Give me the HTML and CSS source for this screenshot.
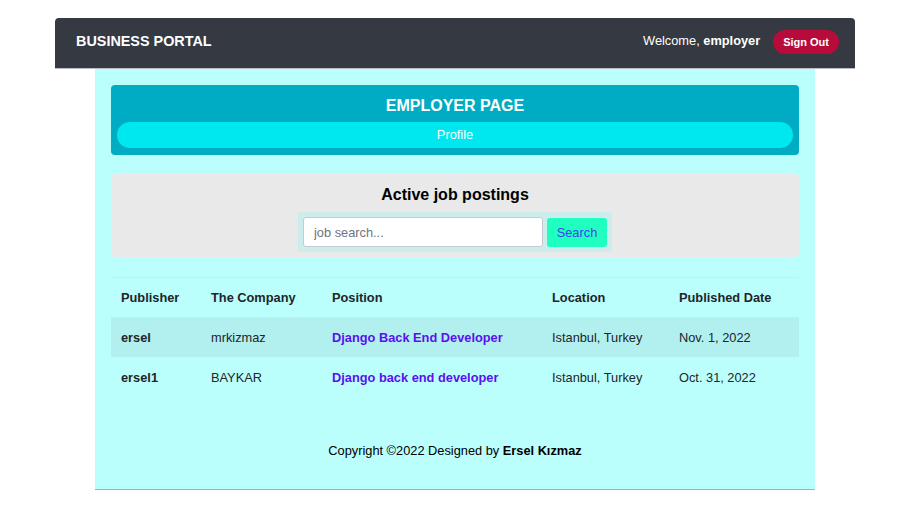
FILE: index.html
```html
<!DOCTYPE html>
<html lang="en">
<head>
<meta charset="utf-8">
<title>Business Portal</title>
<link rel="stylesheet" href="styles.css">
</head>
<body>
<div class="page">
  <nav class="navbar">
    <span class="brand">BUSINESS PORTAL</span>
    <div class="nav-right">
      <span class="welcome">Welcome, <b>employer</b></span>
      <a class="signout" href="#">Sign Out</a>
    </div>
  </nav>
  <main class="container">
    <section class="emp-card">
      <h2 class="emp-title">EMPLOYER PAGE</h2>
      <a class="profile" href="#">Profile</a>
    </section>
    <section class="postings">
      <h3 class="postings-title">Active job postings</h3>
      <form class="search">
        <input class="search-input" type="text" placeholder="job search...">
        <button class="search-btn" type="button">Search</button>
      </form>
    </section>
    <table class="jobs">
      <colgroup>
        <col class="c1"><col class="c2"><col class="c3"><col class="c4"><col class="c5">
      </colgroup>
      <thead>
        <tr><th>Publisher</th><th>The Company</th><th>Position</th><th>Location</th><th>Published Date</th></tr>
      </thead>
      <tbody>
        <tr class="odd"><td class="pub">ersel</td><td>mrkizmaz</td><td><a class="pos" href="#">Django Back End Developer</a></td><td>Istanbul, Turkey</td><td>Nov. 1, 2022</td></tr>
        <tr><td class="pub">ersel1</td><td>BAYKAR</td><td><a class="pos" href="#">Django back end developer</a></td><td>Istanbul, Turkey</td><td>Oct. 31, 2022</td></tr>
      </tbody>
    </table>
    <footer class="footer">Copyright ©2022 Designed by <b>Ersel Kızmaz</b></footer>
  </main>
</div>
</body>
</html>
```
FILE: styles.css
```css
* { box-sizing: border-box; }
body {
  margin: 0;
  background: #ffffff;
  font-family: "Liberation Sans", Arial, sans-serif;
  color: #212529;
}
.page {
  width: 800px;
  margin: 18px 0 0 55px;
}
.navbar {
  height: 51px;
  background: #353941;
  border-radius: 4px 4px 0 0;
  border-bottom: 1px solid #b9bcc2;
  display: flex;
  align-items: center;
  justify-content: space-between;
  padding: 0 16px 2px 21px;
}
.brand {
  color: #ffffff;
  font-weight: bold;
  font-size: 14.4px;
  margin-top: -2px;
}
.nav-right {
  display: flex;
  align-items: center;
  gap: 13px;
}
.welcome {
  color: #ffffff;
  font-size: 12.8px;
  margin-top: -3px;
}
.signout {
  background: #b70b3b;
  color: #ffffff;
  font-weight: bold;
  font-size: 11px;
  text-decoration: none;
  height: 24px;
  line-height: 24px;
  padding: 0 10px;
  border-radius: 12px;
}
.container {
  margin: 0 40px;
  background: #bbfffd;
  padding: 16px 16px 0;
  border-bottom: 1px solid #aab0b0;
}
.emp-card {
  background: #00acc4;
  border-radius: 4px;
  padding: 11px 6px 7px;
  display: flex;
  flex-direction: column;
  align-items: stretch;
}
.emp-title {
  margin: 0 0 6px;
  text-align: center;
  color: #ffffff;
  font-size: 16px;
  line-height: 20px;
  font-weight: bold;
}
.profile {
  height: 26px;
  line-height: 26px;
  background: #00e8ef;
  border-radius: 13px;
  color: #ffffff;
  text-align: center;
  font-size: 12.8px;
  text-decoration: none;
}
.postings {
  margin-top: 19px;
  background: #e9e9e9;
  border-radius: 4px;
  padding: 11px 0 5px;
  display: flex;
  flex-direction: column;
  align-items: center;
}
.postings-title {
  margin: 0 0 7px;
  font-size: 16px;
  line-height: 20px;
  font-weight: bold;
  color: #000000;
}
.search {
  display: flex;
  align-items: center;
  gap: 4px;
  background: #cdecec;
  border-radius: 4px;
  padding: 5px;
  margin: 0;
}
.search-input {
  width: 240px;
  height: 30px;
  border: 1px solid #c6cbd3;
  border-radius: 3px;
  padding: 0 10px;
  font-family: "Liberation Sans", Arial, sans-serif;
  font-size: 12.8px;
  color: #333;
  background: #ffffff;
}
.search-input::placeholder { color: #6c757d; }
.search-btn {
  width: 60px;
  height: 29px;
  border: none;
  border-radius: 3px;
  background: #1fffc0;
  color: #3f3ff0;
  font-family: "Liberation Sans", Arial, sans-serif;
  font-size: 12.8px;
  padding: 0;
}
.jobs {
  margin-top: 20px;
  width: 100%;
  border-collapse: collapse;
  table-layout: fixed;
  font-size: 12.8px;
  border-top: 1px solid #d6e6ea;
}
.c1 { width: 90px; }
.c2 { width: 121px; }
.c3 { width: 220px; }
.c4 { width: 127px; }
.c5 { width: 130px; }
.jobs th, .jobs td {
  text-align: left;
  padding: 0 10px;
  height: 40px;
  white-space: nowrap;
}
.jobs th { font-weight: bold; color: #212529; }
.jobs td { color: #212529; }
.jobs tbody tr { border-top: 1px solid #cfeaee; }
.jobs tr.odd { background: #b1f0ef; }
.jobs tbody tr:last-child { border-top-color: #d0f3f3; }
.pub { font-weight: bold; }
.pos {
  color: #5a10f0;
  font-weight: bold;
  text-decoration: none;
}
.footer {
  text-align: center;
  font-size: 12.8px;
  color: #000000;
  padding: 45px 0 30px;
  line-height: 16px;
}
```
